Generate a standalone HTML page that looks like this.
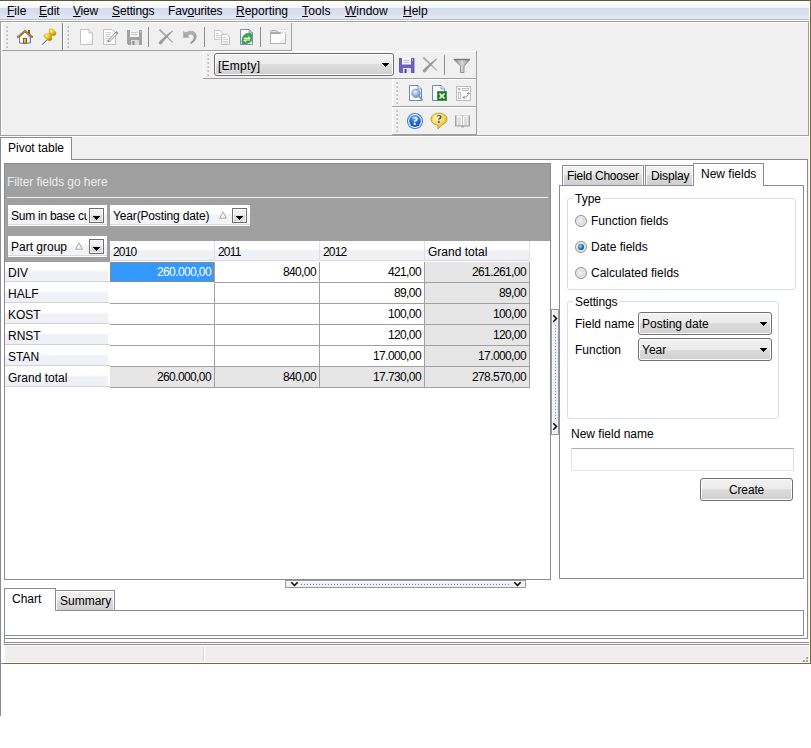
<!DOCTYPE html>
<html>
<head>
<meta charset="utf-8">
<title>Pivot table</title>
<style>
*{box-sizing:border-box;margin:0;padding:0}
html,body{width:811px;height:748px;overflow:hidden;background:#fff}
body{position:relative;font-family:"Liberation Sans",sans-serif;font-size:12px;color:#000}
.a{position:absolute}
.t{position:absolute;white-space:nowrap;line-height:14px;height:14px}
#win{left:0;top:0;width:811px;height:664px;background:#f0f0f0}
/* menu */
#menu{left:0;top:1px;width:810px;height:20px;background:linear-gradient(#ffffff 0,#f1f4fa 7px,#d4d9ec 7px,#dde2f2 14px,#e3e7f5 18px,#b8bdd2 18px,#b8bdd2 19px,#ffffff 19px)}
#menu span{position:absolute;top:3px;line-height:14px;white-space:nowrap}
#menu u{text-decoration:underline;text-underline-offset:1px}
.hl{background:#a0a0a0;height:1px}
.vl{background:#a0a0a0;width:1px}
.grip{width:2px;height:22px;background-image:linear-gradient(135deg,#d4d4d4 0,#d4d4d4 50%,#b0b0b0 50%,#b0b0b0 100%);background-size:2px 2px;background-repeat:repeat-y;-webkit-mask:linear-gradient(#000 0,#000 2px,transparent 2px) 0 0/2px 4px;mask:linear-gradient(#000 0,#000 2px,transparent 2px) 0 0/2px 4px}
.sep{width:1px;background:#8d8d8d}
/* pivot */
.fbtn{background:linear-gradient(#ffffff 0,#ffffff 8px,#f1f2f7 10px,#f4f5f9 19px,#d9dae0 19px,#d9dae0 20px,#fdfdfd 20px);height:21px}
.dd{width:15px;height:15px;border:1px solid #6e6e6e;background:linear-gradient(#f2f2f2 0,#eeeeee 50%,#dddddd 50%,#dadada 100%);box-shadow:inset 0 0 0 1px #fff}
.dd:after{content:"";position:absolute;left:3px;top:7px;width:7px;height:4px;background:#000;clip-path:polygon(0 0,7px 0,7px 1px,6px 1px,6px 2px,5px 2px,5px 3px,4px 3px,4px 4px,3px 4px,3px 3px,2px 3px,2px 2px,1px 2px,1px 1px,0 1px)}
.hd{background:linear-gradient(#ffffff 0,#ffffff 8px,#f0f1f6 10px,#f0f1f6 100%);border-bottom:1px solid #d8d9de;border-right:1px solid #dfe1e6;height:20px;top:241px;width:105px}
.rh{left:5px;width:105px;height:20px;background:linear-gradient(#ffffff 0,#ffffff 8px,#f0f1f6 10px,#f0f1f6 100%) no-repeat 0 0/103px 100%;border-bottom:1px solid #d2d3d8}
.c{width:105px;height:21px;border-right:1px solid #a0a0a0;border-bottom:1px solid #a0a0a0;background:#fff;text-align:right;padding-right:3px;line-height:21px;white-space:nowrap;letter-spacing:-.6px}
.g{background:#e6e6e6}
.tab{border:1px solid #898c95;border-bottom:0;background:linear-gradient(#f2f2f2 0,#ebebeb 50%,#dddddd 50%,#cfcfcf 100%);box-shadow:inset 1px 1px 0 #fcfcfc,inset -1px 0 0 #fcfcfc}
.tabs{border:1px solid #898c95;border-bottom:0;background:#fff}
.grp{border:1px solid #d5dfe5;border-radius:3px}
.combo{border:1px solid #707070;border-radius:3px;background:linear-gradient(#f2f2f2 0,#ebebeb 50%,#dddddd 50%,#cfcfcf 100%);box-shadow:inset 0 0 0 1px #fcfcfc}
.arr{width:7px;height:4px;background:#000;clip-path:polygon(0 0,7px 0,7px 1px,6px 1px,6px 2px,5px 2px,5px 3px,4px 3px,4px 4px,3px 4px,3px 3px,2px 3px,2px 2px,1px 2px,1px 1px,0 1px)}
.radio{width:12px;height:12px;border-radius:50%;border:1px solid #8e8f8f;background:radial-gradient(circle at 45% 45%,#f4f4f4 0,#dcdcdc 45%,#c4c4c4 100%);box-shadow:inset 0 0 0 1px #f3f3f3}
</style>
</head>
<body>
<div id="win" class="a"></div>
<div class="a" style="left:0;top:0;width:811px;height:1px;background:#5c5a34"></div>
<!-- menu bar -->
<div id="menu" class="a">
<span style="left:7px"><u>F</u>ile</span>
<span style="left:39px"><u>E</u>dit</span>
<span style="left:73px;letter-spacing:-.2px"><u>V</u>iew</span>
<span style="left:112px;letter-spacing:-.12px"><u>S</u>ettings</span>
<span style="left:168px;letter-spacing:-.17px">Fav<u>o</u>urites</span>
<span style="left:236px"><u>R</u>eporting</span>
<span style="left:302px;letter-spacing:.15px"><u>T</u>ools</span>
<span style="left:345px"><u>W</u>indow</span>
<span style="left:403px"><u>H</u>elp</span>
</div>
<div class="a hl" style="left:0;top:21px;width:809px"></div>
<div class="a" style="left:1px;top:22px;width:807px;height:1px;background:#fff"></div>
<div class="a vl" style="left:808px;top:21px;height:115px"></div>
<div class="a" style="left:809px;top:1px;width:1px;height:662px;background:#fff"></div>

<!-- TOOLBARS -->

<!-- toolbar row 1 -->
<div class="a vl" style="left:0px;top:21px;height:115px"></div>
<div class="a" style="left:1px;top:22px;width:1px;height:113px;background:#fff"></div>
<div class="a" style="left:2px;top:22px;width:1px;height:28px;background:#fff"></div>
<div class="a grip" style="left:6px;top:26px"></div>
<div class="a" style="left:62px;top:23px;width:1px;height:27px;background:#7a7a7a"></div>
<div class="a" style="left:63px;top:23px;width:1px;height:27px;background:#fff"></div>
<div class="a grip" style="left:67px;top:26px"></div>
<div class="a sep" style="left:148px;top:27px;height:20px"></div>
<div class="a sep" style="left:204px;top:27px;height:20px"></div>
<div class="a sep" style="left:260px;top:27px;height:20px"></div>
<div class="a vl" style="left:291px;top:23px;height:28px"></div>
<div class="a hl" style="left:2px;top:50px;width:290px"></div>
<!-- row 2 -->
<div class="a" style="left:203px;top:51px;width:273px;height:1px;background:#fff"></div>
<div class="a" style="left:203px;top:51px;width:1px;height:27px;background:#fff"></div>
<div class="a grip" style="left:207px;top:54px"></div>
<div class="a combo" style="left:214px;top:53px;width:180px;height:23px"></div>
<div class="t" style="left:218px;top:59px;letter-spacing:.25px">[Empty]</div>
<div class="a arr" style="left:382px;top:63px"></div>
<div class="a sep" style="left:444px;top:55px;height:20px"></div>
<div class="a vl" style="left:476px;top:51px;height:84px"></div>
<div class="a hl" style="left:203px;top:78px;width:274px"></div>
<!-- row 3 -->
<div class="a" style="left:392px;top:79px;width:84px;height:1px;background:#fff"></div>
<div class="a" style="left:392px;top:79px;width:1px;height:27px;background:#fff"></div>
<div class="a grip" style="left:396px;top:82px"></div>
<div class="a hl" style="left:392px;top:106px;width:85px"></div>
<!-- row 4 -->
<div class="a" style="left:392px;top:107px;width:84px;height:1px;background:#fff"></div>
<div class="a" style="left:392px;top:107px;width:1px;height:27px;background:#fff"></div>
<div class="a grip" style="left:396px;top:110px"></div>
<div class="a hl" style="left:392px;top:134px;width:85px"></div>
<div class="a" style="left:0px;top:135px;width:809px;height:1px;background:#a0a0a0"></div>

<!-- home -->
<svg class="a" style="left:16px;top:28px" width="18" height="17" viewBox="0 0 18 17">
<defs><linearGradient id="wg" x1="0" x2="1"><stop offset="0" stop-color="#fff"/><stop offset=".6" stop-color="#fff"/><stop offset="1" stop-color="#dcdcf4"/></linearGradient><linearGradient id="cg" x1="0" y1="0" x2="0" y2="1"><stop offset="0" stop-color="#b03818"/><stop offset="1" stop-color="#682010"/></linearGradient></defs>
<rect x="12.100" y="2" width="1.800" height="4.600" fill="url(#cg)"/>
<path d="M3.600 9 L3.600 15.100 L14.400 15.100 L14.400 9 L9 3.800 Z" fill="url(#wg)" stroke="#5a78a8" stroke-width="1"/>
<path d="M1.300 9.500 L9 2.900 L16.700 9.500" fill="none" stroke="#7a5a30" stroke-width="1.900"/>
<path d="M2.200 8.700 L9 2.900 L15.800 8.700" fill="none" stroke="#f8bc08" stroke-width="1" stroke-dasharray="1.100 .35"/>
<rect x="7.500" y="10.400" width="3" height="4.800" fill="#ffc000" stroke="#6a5020" stroke-width=".9"/>
<rect x="9.400" y="12.400" width=".8" height="1.200" fill="#a07010"/>
</svg>
<!-- pin -->
<svg class="a" style="left:41px;top:28px" width="17" height="18" viewBox="0 0 17 18">
<defs><radialGradient id="pg" cx=".35" cy=".3" r=".8"><stop offset="0" stop-color="#fff090"/><stop offset=".4" stop-color="#f6c814"/><stop offset="1" stop-color="#a87800"/></radialGradient></defs>
<path d="M5.800 12 L1.100 16.800" stroke="#405888" stroke-width="1"/>
<path d="M5.300 11.600 L3.200 13.800" stroke="#b8c8e0" stroke-width="1"/>
<path d="M2.900 7.400 L4.100 5.900 L6.700 5.900 L8.800 5.100 L10.800 7.700 L10.800 11.800 L9.400 12.700 L7.300 12.700 L2.900 8.600 Z" fill="url(#pg)" stroke="#c8a020" stroke-width=".5" stroke-linejoin="round"/>
<path d="M8.200 1.800 L9.400 .9 L11.700 .9 L14.900 4.200 L14.900 6.500 L13.500 7.700 L11.700 7.400 L8.200 3.900 Z" fill="url(#pg)" stroke="#c8a020" stroke-width=".5" stroke-linejoin="round"/>
<path d="M8.500 5 L11.500 8 " stroke="#b88808" stroke-width="1" opacity=".7"/>
</svg>
<!-- new page -->
<svg class="a" style="left:79px;top:28px" width="16" height="18" viewBox="0 0 16 18">
<path d="M1.5 1.5 L10 1.5 L13.5 5 L13.5 16.5 L1.5 16.5 Z" fill="#fff" stroke="#c0c0c0"/>
<path d="M10 1.5 L10 5 L13.5 5" fill="#f0f0f0" stroke="#c0c0c0"/>
<path d="M13 10 L13 16 L7 16 Z" fill="#f2f2f2"/>
</svg>
<!-- edit -->
<svg class="a" style="left:102px;top:28px" width="18" height="18" viewBox="0 0 18 18">
<path d="M1.5 1.5 L10 1.5 L13.5 5 L13.5 16.5 L1.5 16.5 Z" fill="#fff" stroke="#c0c0c0"/>
<path d="M3.5 4.5H9M3.5 6.5H9M3.5 8.5H9M3.5 10.5H8M3.5 12.5H6" stroke="#d0d0d0"/>
<path d="M6 12.6 L14.2 3.6 L16 5.2 L7.6 13.8 Z" fill="#e8e8e8" stroke="#8c8c8c" stroke-width=".8"/>
<path d="M13.2 4.6 L14.2 3.6 L16 5.2 L15 6.2Z" fill="#8c8c8c"/>
<path d="M5.4 14 L6 12.6 L7.6 13.8 Z" fill="#505050"/>
</svg>
<!-- save grey -->
<svg class="a" style="left:127px;top:30px" width="16" height="15" viewBox="0 0 16 15">
<path d="M0 0 H15 V15 H1.5 L0 13.5 Z" fill="#a2a2a2"/>
<rect x="3" y="0" width="9" height="7" fill="#f4f4f4"/>
<path d="M4.5 2.5H10.5M4.5 4.5H10.5" stroke="#c4c4c4"/>
<rect x="13" y="1" width="1" height="1.5" fill="#e0e0e0"/>
<rect x="4" y="10" width="8" height="5" fill="#dcdcdc"/>
<rect x="5.5" y="11" width="2" height="4" fill="#8c8c8c"/>
</svg>
<!-- X grey -->
<svg class="a" style="left:158px;top:28px" width="16" height="17" viewBox="0 0 16 17">
<path d="M.6 2.300 L2.200 .9 L15.100 14 L14.400 14.700 Z" fill="#a8a8a8"/>
<path d="M14.900 2.200 L14.900 3.600 C11 7.200 7 11.600 3.800 15.800 C3 16.800 1.600 16.600 1 15.800 C.4 15 .8 14 1.600 13.200 C5.500 9.500 10 5.500 14.900 2.200 Z" fill="#9a9a9a"/>
</svg>
<!-- undo -->
<svg class="a" style="left:182px;top:29px" width="17" height="16" viewBox="0 0 17 16">
<defs><linearGradient id="ug" x1="0" y1="0" x2="0" y2="1"><stop offset="0" stop-color="#b4b4b4"/><stop offset="1" stop-color="#8e8e8e"/></linearGradient></defs>
<path d="M1 2 L1.300 8.700 L7.700 8.400 L6 6.800 C7.500 5.200 10.500 4.800 11.600 7.400 C12.200 9.400 10.600 11.800 8.200 13.600 L9 15 C12.500 13 15.200 9.600 14.600 6.200 C13.800 1.600 8.400 0 3.600 3.600 Z" fill="url(#ug)"/>
</svg>
<!-- copy -->
<svg class="a" style="left:213px;top:29px" width="18" height="17" viewBox="0 0 18 17">
<path d="M1.5 1.5 H7 L9.5 4 V10.5 H1.5 Z" fill="#fafafa" stroke="#c8c8c8"/>
<path d="M3 4.5H6M3 6.5H8M3 8.5H8" stroke="#d4d4d4"/>
<path d="M8.5 5.5 H14 L16.5 8 V15.5 H8.5 Z" fill="#fafafa" stroke="#c0c0c0"/>
<path d="M10 8.5H13M10 10.5H15M10 12.5H15M10 14H15" stroke="#d0d0d0"/>
</svg>
<!-- refresh doc -->
<svg class="a" style="left:239px;top:28px" width="16" height="18" viewBox="0 0 16 18">
<path d="M1.500 1.500 H10 L13.500 5 V16.500 H1.500 Z" fill="#fbfcff" stroke="#6a84b0" stroke-width=".9"/>
<path d="M10 1.500 V5 H13.500 Z" fill="#dce6f6" stroke="#6a84b0" stroke-width=".7"/>
<path d="M3.200 16 C2.400 12 3.400 7.500 7 5.800 C9 5 11.500 5 13 6.400 V12.500 C12 15 8.500 16.600 3.200 16 Z" fill="#3fa640"/>
<path d="M3.200 16 C2.400 12 3.400 7.500 7 5.800 C9 5 11.500 5 13 6.400" fill="none" stroke="#2c8a30" stroke-width=".6"/>
<path d="M5 9.800 H9 V8.200 L12 10.400 L9 10.900 L5 10.900 Z" fill="#fff"/>
<path d="M11 12.600 H7 V14.200 L4 12 L7 11.500 L11 11.500 Z" fill="#fff"/>
</svg>
<!-- folder/window -->
<svg class="a" style="left:269px;top:28px" width="18" height="17" viewBox="0 0 18 17">
<path d="M1.500 5.500 V3.500 Q1.500 2.500 2.500 2.500 H7 Q8 2.500 8.500 3.500 L9.500 5" fill="#e0e0e0" stroke="#b0b0b0"/>
<rect x="1.500" y="5.500" width="15" height="10" fill="#fdfdfd" stroke="#b4b4b4"/>
<path d="M1.500 5 H16.500" stroke="#a4a4a4" stroke-width="1.600"/>
<path d="M16 10 V15 H10 Z" fill="#ededed"/>
<rect x="11.800" y=".6" width="5.400" height="5.400" fill="#f0f0f0"/>
<path d="M14.500 .5 V5.500 M12 3 H17" stroke="#fff" stroke-width="1.200"/>
<path d="M12.500 1 h1 v1 h-1z M15.500 1 h1 v1 h-1z M12.500 4 h1 v1 h-1z M15.500 4 h1 v1 h-1z" fill="#bdbdbd"/>
<rect x="14" y="2.500" width="1" height="1" fill="#d8d8d8"/>
</svg>
<!-- save purple -->
<svg class="a" style="left:399px;top:58px" width="16" height="15" viewBox="0 0 16 15">
<path d="M0 0 H15 V15 H1.500 L0 13.500 Z" fill="#6e60bc"/>
<path d="M0 0 H15 V15 H1.500 L0 13.500 Z" fill="none" stroke="#5a4ca8" stroke-width=".8"/>
<rect x="3" y="0" width="9" height="6.500" fill="#f8f8ff"/>
<path d="M4.500 2.500H10.500M4.500 4.500H10.500" stroke="#c0bce0"/>
<rect x="13" y="1" width="1" height="1.500" fill="#d8d4f0"/>
<rect x="4" y="10" width="8" height="5" fill="#e4e4ec"/>
<rect x="5.500" y="11" width="2" height="4" fill="#4a4090"/>
</svg>
<!-- X grey 2 -->
<svg class="a" style="left:422px;top:56px" width="16" height="17" viewBox="0 0 16 17">
<path d="M.6 2.300 L2.200 .9 L15.100 14 L14.400 14.700 Z" fill="#a8a8a8"/>
<path d="M14.900 2.200 L14.900 3.600 C11 7.200 7 11.600 3.800 15.800 C3 16.800 1.600 16.600 1 15.800 C.4 15 .8 14 1.600 13.200 C5.500 9.500 10 5.500 14.900 2.200 Z" fill="#9a9a9a"/>
</svg>
<!-- funnel -->
<svg class="a" style="left:453px;top:58px" width="18" height="16" viewBox="0 0 18 16">
<defs><linearGradient id="fg" x1="0" x2="1"><stop offset="0" stop-color="#8a8a8a"/><stop offset=".5" stop-color="#d8d8d8"/><stop offset="1" stop-color="#8a8a8a"/></linearGradient></defs>
<path d="M1 1.500 H17 L11 8 V14.500 H7.500 V8 Z" fill="url(#fg)" stroke="#808080" stroke-width=".8"/>
<path d="M1 1.500 H17" stroke="#787878" stroke-width="1.400"/>
</svg>
<!-- preview -->
<svg class="a" style="left:408px;top:84px" width="16" height="18" viewBox="0 0 16 18">
<defs><radialGradient id="mg" cx=".4" cy=".35" r=".7"><stop offset="0" stop-color="#e8f2ff"/><stop offset=".6" stop-color="#8ab0e0"/><stop offset="1" stop-color="#5c88c8"/></radialGradient></defs>
<path d="M1.500 1.500 H10 L13.500 5 V16.500 H1.500 Z" fill="#fafcff" stroke="#7088b4"/>
<path d="M10 1.500 V5 H13.500" fill="#e4ecf8" stroke="#7088b4" stroke-width=".8"/>
<path d="M11 12 L14.500 16.500" stroke="#909090" stroke-width="1.800"/>
<circle cx="8" cy="9.300" r="4.300" fill="url(#mg)" stroke="#8aa0c4" stroke-width=".8"/>
</svg>
<!-- excel -->
<svg class="a" style="left:431px;top:84px" width="17" height="18" viewBox="0 0 17 18">
<path d="M1.500 1.500 H10 L13.500 5 V16.500 H1.500 Z" fill="#fafcff" stroke="#7088b4"/>
<path d="M10 1.500 V5 H13.500" fill="#e4ecf8" stroke="#7088b4" stroke-width=".8"/>
<rect x="6" y="7" width="10" height="10" fill="#1f7a24"/>
<rect x="6.500" y="7.500" width="9" height="9" fill="none" stroke="#4fa050" stroke-width=".8"/>
<path d="M8.500 9.500 L13.500 14.500 M13.500 9.500 L8.500 14.500" stroke="#fff" stroke-width="1.700"/>
</svg>
<!-- pivot -->
<svg class="a" style="left:456px;top:86px" width="16" height="16" viewBox="0 0 16 16">
<rect x=".5" y=".5" width="14" height="14" fill="#fcfcfc" stroke="#bcbcbc"/>
<rect x="2.500" y="2.500" width="1.500" height="1.500" fill="#fff" stroke="#b0b0b0" stroke-width=".8"/>
<rect x="6.500" y="2.500" width="6" height="2" fill="#fff" stroke="#b0b0b0" stroke-width=".8"/>
<rect x="2.500" y="6.500" width="2" height="6" fill="#fff" stroke="#b0b0b0" stroke-width=".8"/>
<path d="M7 11.500 C10.500 11.500 12 10 12.500 7" fill="none" stroke="#8c8c8c" stroke-width=".9"/>
<path d="M8.500 10 L7 11.500 L8.500 13 M11 8 L12.500 6.500 L13.800 8" fill="none" stroke="#8c8c8c" stroke-width=".9"/>
</svg>
<!-- help blue -->
<svg class="a" style="left:406px;top:112px" width="18" height="18" viewBox="0 0 18 18">
<defs><radialGradient id="hg" cx=".5" cy=".25" r=".8"><stop offset="0" stop-color="#7ab8f8"/><stop offset=".5" stop-color="#2a70d0"/><stop offset="1" stop-color="#1448a8"/></radialGradient></defs>
<circle cx="9" cy="9" r="7.500" fill="#fff" stroke="#2f7ce0" stroke-width="1.100"/>
<circle cx="9" cy="9" r="5.900" fill="url(#hg)"/>
<text x="9" y="13.200" font-family="Liberation Serif,serif" font-weight="bold" font-size="12" fill="#fff" text-anchor="middle">?</text>
</svg>
<!-- help yellow -->
<svg class="a" style="left:430px;top:112px" width="18" height="18" viewBox="0 0 18 18">
<defs><radialGradient id="yg" cx=".4" cy=".3" r=".8"><stop offset="0" stop-color="#fff8c0"/><stop offset=".5" stop-color="#f4d860"/><stop offset="1" stop-color="#d8a020"/></radialGradient></defs>
<path d="M9 1.200 C13.800 1.200 17 3.800 17 7.200 C17 10 14.600 12.200 11.400 12.900 C10.600 14.600 9.400 16 7.800 16.800 C8.200 15.600 8.200 14.200 7.800 13.100 C3.800 12.700 1 10.300 1 7.200 C1 3.800 4.200 1.200 9 1.200 Z" fill="url(#yg)" stroke="#c49030" stroke-width=".9"/>
<text x="9" y="11" font-family="Liberation Serif,serif" font-weight="bold" font-size="11.500" fill="#4c5464" text-anchor="middle">?</text>
</svg>
<!-- book -->
<svg class="a" style="left:455px;top:115px" width="16" height="13" viewBox="0 0 16 13">
<path d="M0 .5 H15 V11.500 H9 L8.500 12.500 H6.500 L6 11.500 H0 Z" fill="#a2a2a2"/>
<path d="M1.500 1 C3.500 .2 5.500 .2 7.200 1.200 V10.600 C5.500 10 3.500 10 1.500 10.600 Z" fill="#fafafa"/>
<path d="M13.500 1 C11.500 .2 9.500 .2 7.800 1.200 V10.600 C9.500 10 11.500 10 13.500 10.600 Z" fill="#fafafa"/>
<path d="M2.500 3H6M2.500 5H6M2.500 7H6M2.500 9H6M9 3H12.500M9 5H12.500M9 7H12.500M9 9H12.500" stroke="#bcbcbc" stroke-width=".9"/>
</svg>



<!-- main tab -->

<!-- main tab control -->
<div class="a" style="left:0px;top:136px;width:809px;height:1px;background:#fff"></div>
<div class="a" style="left:0px;top:137px;width:809px;height:22px;background:#f0f0f0"></div>
<div class="a" style="left:0px;top:159px;width:808px;height:480px;background:#fff;border:1px solid #898c95"></div>
<div class="a tabs" style="left:0px;top:137px;width:72px;height:23px"></div>
<div class="t" style="left:8px;top:141px">Pivot table</div>
<!-- pivot grid -->
<div class="a" style="left:4px;top:163px;width:547px;height:417px;border:1px solid #898c95;background:#fff"></div>
<div class="a" style="left:5px;top:164px;width:545px;height:77px;background:#a0a0a0"></div>
<div class="a" style="left:5px;top:241px;width:105px;height:21px;background:#a0a0a0"></div>
<div class="t" style="left:7px;top:175px;color:#ececec;letter-spacing:-.07px">Filter fields go here</div>
<div class="a" style="left:7px;top:197px;width:541px;height:1px;background:#f0f0f0"></div>
<div class="a fbtn" style="left:8px;top:205px;width:99px"></div>
<div class="t" style="left:11px;top:209px;width:76px;overflow:hidden;letter-spacing:-.25px">Sum in base cu</div>
<div class="a dd" style="left:89px;top:208px"></div>
<div class="a fbtn" style="left:110px;top:205px;width:140px"></div>
<div class="t" style="left:113px;top:209px;letter-spacing:-.15px">Year(Posting date)</div>
<svg class="a" style="left:219px;top:211px" width="8" height="8" viewBox="0 0 8 8"><path d="M4 .8 L7.300 7.200 H.7 Z" fill="#f4f4f4" stroke="#a4a4a4" stroke-width=".9"/></svg>
<div class="a dd" style="left:232px;top:208px"></div>
<div class="a fbtn" style="left:8px;top:236px;width:99px"></div>
<div class="t" style="left:11px;top:240px">Part group</div>
<svg class="a" style="left:75px;top:242px" width="8" height="8" viewBox="0 0 8 8"><path d="M4 .8 L7.300 7.200 H.7 Z" fill="#f4f4f4" stroke="#a4a4a4" stroke-width=".9"/></svg>
<div class="a dd" style="left:89px;top:239px"></div>
<!-- column headers -->
<div class="a hd" style="left:110px"></div><div class="t" style="left:113px;top:245px;letter-spacing:-.8px">2010</div>
<div class="a hd" style="left:215px"></div><div class="t" style="left:218px;top:245px;letter-spacing:-.8px">2011</div>
<div class="a hd" style="left:320px"></div><div class="t" style="left:323px;top:245px;letter-spacing:-.8px">2012</div>
<div class="a hd" style="left:425px"></div><div class="t" style="left:428px;top:245px">Grand total</div>
<div class="a rh" style="top:262px"></div><div class="t" style="left:8px;top:266px">DIV</div>
<div class="a c" style="left:110px;top:262px;border-bottom-color:#fff;padding:0"><div class="a" style="left:0;top:0;width:104px;height:20px;background:#3399ff;color:#fff;border:1px dotted #d87a20;line-height:19px;padding-right:2px">260.000,00</div></div><div class="a c" style="left:215px;top:262px">840,00</div><div class="a c" style="left:320px;top:262px">421,00</div><div class="a c g" style="left:425px;top:262px">261.261,00</div>
<div class="a rh" style="top:283px"></div><div class="t" style="left:8px;top:287px">HALF</div>
<div class="a c" style="left:110px;top:283px"></div><div class="a c" style="left:215px;top:283px"></div><div class="a c" style="left:320px;top:283px">89,00</div><div class="a c g" style="left:425px;top:283px">89,00</div>
<div class="a rh" style="top:304px"></div><div class="t" style="left:8px;top:308px">KOST</div>
<div class="a c" style="left:110px;top:304px"></div><div class="a c" style="left:215px;top:304px"></div><div class="a c" style="left:320px;top:304px">100,00</div><div class="a c g" style="left:425px;top:304px">100,00</div>
<div class="a rh" style="top:325px"></div><div class="t" style="left:8px;top:329px">RNST</div>
<div class="a c" style="left:110px;top:325px"></div><div class="a c" style="left:215px;top:325px"></div><div class="a c" style="left:320px;top:325px">120,00</div><div class="a c g" style="left:425px;top:325px">120,00</div>
<div class="a rh" style="top:346px"></div><div class="t" style="left:8px;top:350px">STAN</div>
<div class="a c" style="left:110px;top:346px"></div><div class="a c" style="left:215px;top:346px"></div><div class="a c" style="left:320px;top:346px">17.000,00</div><div class="a c g" style="left:425px;top:346px">17.000,00</div>
<div class="a rh" style="top:367px"></div><div class="t" style="left:8px;top:371px">Grand total</div>
<div class="a c g" style="left:110px;top:367px">260.000,00</div><div class="a c g" style="left:215px;top:367px">840,00</div><div class="a c g" style="left:320px;top:367px">17.730,00</div><div class="a c g" style="left:425px;top:367px">278.570,00</div>

<!-- vertical splitter -->
<div class="a" style="left:551px;top:309px;width:8px;height:126px;background:linear-gradient(90deg,#fff 0,#fff 1px,#f0f0f0 1px);border:1px solid #989898"></div>
<div class="a" style="left:555px;top:325px;width:1px;height:94px;background-image:linear-gradient(#3c96f0 0,#3c96f0 1px,transparent 1px);background-size:1px 3px"></div>
<svg class="a" style="left:552px;top:314px" width="6" height="9" viewBox="0 0 6 9"><path d="M1.300 1.300 L4.500 4.500 L1.300 7.700" fill="none" stroke="#000" stroke-width="1.500"/></svg>
<svg class="a" style="left:552px;top:422px" width="6" height="9" viewBox="0 0 6 9"><path d="M1.300 1.300 L4.500 4.500 L1.300 7.700" fill="none" stroke="#000" stroke-width="1.500"/></svg>
<!-- horizontal splitter -->
<div class="a" style="left:285px;top:580px;width:241px;height:8px;background:linear-gradient(#fff 0,#fff 1px,#f0f0f0 1px);border:1px solid #989898"></div>
<div class="a" style="left:301px;top:584px;width:210px;height:1px;background-image:linear-gradient(90deg,#3c96f0 0,#3c96f0 1px,transparent 1px);background-size:3px 1px"></div>
<svg class="a" style="left:290px;top:581px" width="9" height="6" viewBox="0 0 9 6"><path d="M1.300 1.300 L4.500 4.500 L7.700 1.300" fill="none" stroke="#000" stroke-width="1.500"/></svg>
<svg class="a" style="left:513px;top:581px" width="9" height="6" viewBox="0 0 9 6"><path d="M1.300 1.300 L4.500 4.500 L7.700 1.300" fill="none" stroke="#000" stroke-width="1.500"/></svg>
<!-- right panel -->
<div class="a" style="left:559px;top:185px;width:245px;height:394px;border:1px solid #898c95;background:#fff"></div>
<div class="a tab" style="left:562px;top:165px;width:82px;height:20px"></div>
<div class="t" style="left:567px;top:169px;letter-spacing:-.23px">Field Chooser</div>
<div class="a tab" style="left:645px;top:165px;width:49px;height:20px"></div>
<div class="t" style="left:651px;top:169px;letter-spacing:-.15px">Display</div>
<div class="a tabs" style="left:693px;top:163px;width:71px;height:23px"></div>
<div class="t" style="left:701px;top:167px">New fields</div>
<div class="a grp" style="left:567px;top:198px;width:229px;height:92px"></div>
<div class="t" style="left:573px;top:192px;background:#fff;padding:0 2px">Type</div>
<div class="a radio" style="left:575px;top:215px"></div><div class="t" style="left:591px;top:214px">Function fields</div>
<div class="a radio" style="left:575px;top:241px"></div><div class="a" style="left:578px;top:244px;width:6px;height:6px;border-radius:50%;background:radial-gradient(circle at 40% 40%,#8fe0ff 0,#2a9cd8 35%,#143c64 75%,#102c48 100%)"></div><div class="t" style="left:591px;top:240px">Date fields</div>
<div class="a radio" style="left:575px;top:267px"></div><div class="t" style="left:591px;top:266px">Calculated fields</div>
<div class="a grp" style="left:567px;top:301px;width:212px;height:118px"></div>
<div class="t" style="left:573px;top:295px;background:#fff;padding:0 2px;letter-spacing:-.12px">Settings</div>
<div class="t" style="left:575px;top:317px">Field name</div>
<div class="a combo" style="left:638px;top:312px;width:134px;height:23px"></div>
<div class="t" style="left:642px;top:317px">Posting date</div>
<div class="a arr" style="left:760px;top:322px"></div>
<div class="t" style="left:575px;top:343px">Function</div>
<div class="a combo" style="left:638px;top:338px;width:134px;height:23px"></div>
<div class="t" style="left:642px;top:343px">Year</div>
<div class="a arr" style="left:760px;top:348px"></div>
<div class="t" style="left:571px;top:427px">New field name</div>
<div class="a" style="left:571px;top:448px;width:223px;height:23px;border:1px solid #abadb3;border-color:#abadb3 #dbdfe6 #e3e9ef #e2e3ea;background:#fff"></div>
<div class="a combo" style="left:700px;top:478px;width:93px;height:23px"></div>
<div class="t" style="left:729px;top:483px;letter-spacing:-.15px">Create</div>
<!-- bottom tab control -->
<div class="a" style="left:4px;top:610px;width:800px;height:26px;border:1px solid #898c95;background:#fff"></div>
<div class="a tabs" style="left:4px;top:588px;width:52px;height:23px"></div>
<div class="t" style="left:12px;top:592px">Chart</div>
<div class="a tab" style="left:55px;top:590px;width:60px;height:20px"></div>
<div class="t" style="left:60px;top:594px">Summary</div>
<div class="a" style="left:4px;top:635px;width:1px;height:8px;background:#898c95"></div>
<div class="a" style="left:4px;top:642px;width:805px;height:1px;background:#898c95"></div>
<!-- status bar -->
<div class="a" style="left:1px;top:638px;width:3px;height:25px;background:#fff"></div>
<div class="a" style="left:5px;top:639px;width:804px;height:3px;background:#fff"></div>
<div class="a" style="left:5px;top:643px;width:804px;height:1px;background:#fff"></div>
<div class="a" style="left:4px;top:643px;width:1px;height:20px;background:#fff"></div>
<div class="a" style="left:4px;top:644px;width:805px;height:1px;background:#8c8c8c"></div>
<div class="a" style="left:5px;top:645px;width:804px;height:1px;background:#fff"></div>
<div class="a" style="left:5px;top:646px;width:804px;height:16px;background:#f0eeec"></div>
<div class="a" style="left:203px;top:647px;width:1px;height:14px;background:#d8d6d4"></div>
<div class="a" style="left:204px;top:647px;width:1px;height:14px;background:#fff"></div>
<div class="a" style="left:805px;top:656px;width:2px;height:2px;background:#fff"></div><div class="a" style="left:806px;top:657px;width:1.500px;height:1.500px;background:#a09c98"></div>
<div class="a" style="left:802px;top:659px;width:2px;height:2px;background:#fff"></div><div class="a" style="left:803px;top:660px;width:1.500px;height:1.500px;background:#a09c98"></div>
<div class="a" style="left:805px;top:659px;width:2px;height:2px;background:#fff"></div><div class="a" style="left:806px;top:660px;width:1.500px;height:1.500px;background:#a09c98"></div>
<div class="a" style="left:5px;top:662px;width:804px;height:1px;background:#fff"></div>
<div class="a" style="left:0;top:663px;width:811px;height:1px;background:#6e6c4e"></div>
<div class="a" style="left:0;top:663px;width:4px;height:1px;background:#898c95"></div>
<div class="a" style="left:810px;top:0px;width:1px;height:664px;background:#6b6838"></div>
<div class="a" style="left:0;top:664px;width:811px;height:84px;background:#fff"></div>
<div class="a" style="left:0px;top:137px;width:1px;height:579px;background:#898c95"></div>

</body>
</html>
